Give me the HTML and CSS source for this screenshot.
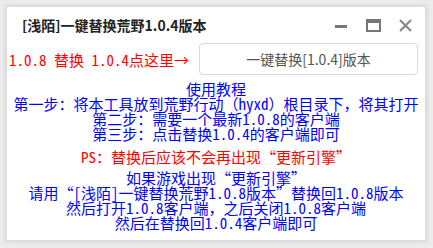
FILE: index.html
```html
<!DOCTYPE html>
<html lang="zh-CN">
<head>
    <meta charset="UTF-8">
    <title>[浅陌]一键替换荒野1.0.4版本</title>
    <link rel="stylesheet" href="styles.css">
</head>
<body>

  <div class="window">
    <div class="title-bar">
      <div class="title">[浅陌]一键替换荒野1.0.4版本</div>
      <div class="controls">
        <svg class="ctl" viewBox="0 0 16 16" width="16" height="16">
          <rect x="2" y="7" width="12" height="3" fill="#777"/>
        </svg>
        <svg class="ctl" viewBox="0 0 16 16" width="16" height="16">
          <rect x="2" y="2" width="13" height="11" fill="none" stroke="#777" stroke-width="2"/>
          <rect x="2" y="2" width="13" height="3" fill="#777"/>
        </svg>
        <svg class="ctl" viewBox="0 0 16 16" width="16" height="16">
          <path d="M3 2 L14 13 M14 2 L3 13" stroke="#888" stroke-width="2.2"/>
        </svg>
      </div>
    </div>

    <div class="action-row">
      <span class="hint">1.0.8 替换 1.0.4点这里→</span>
      <button class="replace-btn">一键替换[1.0.4]版本</button>
    </div>

    <div class="guide">
      <p class="line">使用教程</p>
      <p class="line">第一步：将本工具放到荒野行动（hyxd）根目录下，将其打开</p>
      <p class="line">第二步：需要一个最新1.0.8的客户端</p>
      <p class="line">第三步：点击替换1.0.4的客户端即可</p>
      <p class="line red ps">PS：替换后应该不会再出现“更新引擎”</p>
      <p class="line tip">如果游戏出现“更新引擎”</p>
      <p class="line">请用“[浅陌]一键替换荒野1.0.8版本”替换回1.0.8版本</p>
      <p class="line">然后打开1.0.8客户端，之后关闭1.0.8客户端</p>
      <p class="line">然后在替换回1.0.4客户端即可</p>
    </div>
  </div>

</body>
</html>
```

FILE: styles.css
```css
body {
  margin: 0;
  width: 433px;
  height: 248px;
  background-color: #ececec;
  overflow: hidden;
}

.window {
  margin: 7px 0 0 7px;
  width: 418px;
  height: 233px;
  background-color: #fff;
  box-shadow: 0 0 4px 2px #d6d6d6;
  display: flex;
  flex-direction: column;
}

.title-bar {
  height: 36px;
  display: flex;
  align-items: center;
  justify-content: space-between;
  padding: 0 12px 0 15px;
}

.title {
  font-family: "Noto Sans CJK SC", "Liberation Sans", sans-serif;
  font-weight: bold;
  font-size: 14px;
  color: #222;
}

.controls {
  display: flex;
  gap: 16px;
  margin-top: 2px;
}

.action-row {
  display: flex;
  align-items: center;
  justify-content: space-between;
  padding: 0 7px 0 2px;
  height: 32px;
}

.hint {
  font-family: "Noto Sans Mono CJK SC", "Noto Sans CJK SC", monospace;
  font-size: 15px;
  color: #ff0000;
}

.replace-btn {
  width: 219px;
  height: 32px;
  background: #fff;
  border: 1px solid #d9d9d9;
  border-radius: 4px;
  font-family: "Noto Sans CJK SC", "Liberation Sans", sans-serif;
  font-size: 14px;
  color: #555;
}

.guide {
  padding-top: 6px;
  text-align: center;
  font-family: "Noto Sans Mono CJK SC", "Noto Sans CJK SC", monospace;
  font-size: 15px;
  color: #0000ff;
}

.line {
  margin: 0;
  line-height: 15px;
  white-space: nowrap;
}

.red {
  color: #ff0000;
}

.ps {
  margin-top: 8px;
}

.tip {
  margin-top: 6px;
}
```
